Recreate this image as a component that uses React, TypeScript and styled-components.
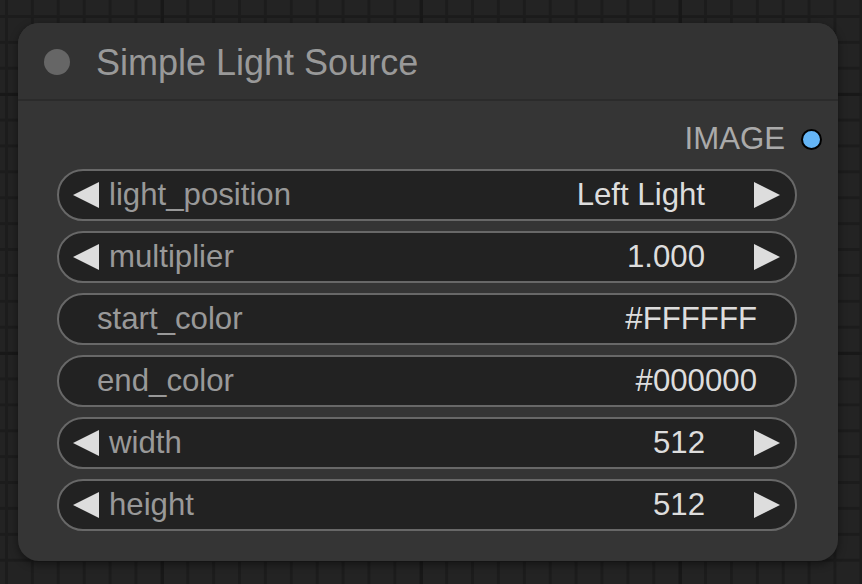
import { createGlobalStyle, styled } from "styled-components";

type WidgetData = {
  label: string;
  value: string;
  arrows: boolean;
};

const widgets: WidgetData[] = [
  { label: "light_position", value: "Left Light", arrows: true },
  { label: "multiplier", value: "1.000", arrows: true },
  { label: "start_color", value: "#FFFFFF", arrows: false },
  { label: "end_color", value: "#000000", arrows: false },
  { label: "width", value: "512", arrows: true },
  { label: "height", value: "512", arrows: true },
];

const GlobalStyle = createGlobalStyle`
  html, body {
    margin: 0;
    padding: 0;
    background: #222222;
  }
  * {
    box-sizing: border-box;
  }
`;

const Arrow = ({ dir }: { dir: "left" | "right" }) => (
  <ArrowSvg viewBox="0 0 26 26" width={26} height={26}>
    {dir === "left" ? (
      <polygon points="26,0 0,13 26,26" fill="#dddddd" />
    ) : (
      <polygon points="0,0 26,13 0,26" fill="#dddddd" />
    )}
  </ArrowSvg>
);

export default function App() {
  return (
    <>
      <GlobalStyle />
      <Canvas>
        <Node>
          <TitleBar>
            <TitleDot />
            <Title>Simple Light Source</Title>
          </TitleBar>
          <Body>
            <OutputRow>
              <SlotLabel>IMAGE</SlotLabel>
              <SlotDot />
            </OutputRow>
            <WidgetList>
              {widgets.map((w) => (
                <Widget key={w.label} $arrows={w.arrows}>
                  {w.arrows && <Arrow dir="left" />}
                  <Label $arrows={w.arrows}>{w.label}</Label>
                  <Value $arrows={w.arrows}>{w.value}</Value>
                  {w.arrows && <Arrow dir="right" />}
                </Widget>
              ))}
            </WidgetList>
          </Body>
        </Node>
      </Canvas>
    </>
  );
}

const Canvas = styled.div`
  width: 862px;
  height: 584px;
  overflow: hidden;
  padding: 23px 24px 23px 18px;
  background-color: #232323;
  background-image: linear-gradient(to right, #181818 0 3px, transparent 3px),
    linear-gradient(to bottom, #181818 0 3px, transparent 3px),
    linear-gradient(to right, #1c1c1c 0 3px, transparent 3px),
    linear-gradient(to bottom, #1c1c1c 0 3px, transparent 3px);
  background-size: 259px 259px, 259px 259px, 25.9px 25.9px, 25.9px 25.9px;
  background-position: 161px 0, 0 93px, 5px 0, 0 15px;
  font-family: "Liberation Sans", Arial, sans-serif;
`;

const Node = styled.div`
  width: 820px;
  height: 538px;
  background: #353535;
  border-radius: 21px;
  box-shadow: 0 3px 8px rgba(0, 0, 0, 0.45);
  display: flex;
  flex-direction: column;
  overflow: hidden;
`;

const TitleBar = styled.div`
  height: 78px;
  flex: none;
  display: flex;
  align-items: center;
  background: #333333;
  border-bottom: 2px solid #2b2b2b;
  padding-left: 26px;
  padding-top: 4px;
`;

const TitleDot = styled.div`
  width: 26px;
  height: 26px;
  border-radius: 50%;
  background: #666666;
  margin-right: 26px;
  margin-top: -2px;
`;

const Title = styled.div`
  font-size: 36px;
  color: #999999;
  line-height: 1;
`;

const Body = styled.div`
  flex: 1;
  display: flex;
  flex-direction: column;
  padding: 0 41px 31px 39px;
`;

const OutputRow = styled.div`
  height: 68px;
  flex: none;
  display: flex;
  align-items: center;
  justify-content: flex-end;
  padding-top: 8px;
  margin-right: -41px;
  padding-right: 16px;
`;

const SlotLabel = styled.span`
  font-size: 31.2px;
  color: #aaaaaa;
  margin-right: 16px;
`;

const SlotDot = styled.div`
  width: 21px;
  height: 21px;
  border-radius: 50%;
  background: #64b5f6;
  border: 2.5px solid #000000;
`;

const WidgetList = styled.div`
  display: flex;
  flex-direction: column;
  gap: 10px;
`;

const Widget = styled.div<{ $arrows: boolean }>`
  height: 52px;
  border-radius: 26px;
  background: #222222;
  border: 2px solid #686868;
  display: flex;
  align-items: center;
  padding-left: ${(p) => (p.$arrows ? "14px" : "38px")};
  padding-right: ${(p) => (p.$arrows ? "15px" : "38px")};
  font-size: 31.2px;
`;

const ArrowSvg = styled.svg`
  flex: none;
  display: block;
`;

const Label = styled.span<{ $arrows: boolean }>`
  color: #999999;
  flex: 1;
  white-space: nowrap;
  margin-left: ${(p) => (p.$arrows ? "10px" : "0")};
`;

const Value = styled.span<{ $arrows: boolean }>`
  color: #dddddd;
  white-space: nowrap;
  margin-right: ${(p) => (p.$arrows ? "49px" : "0")};
`;
